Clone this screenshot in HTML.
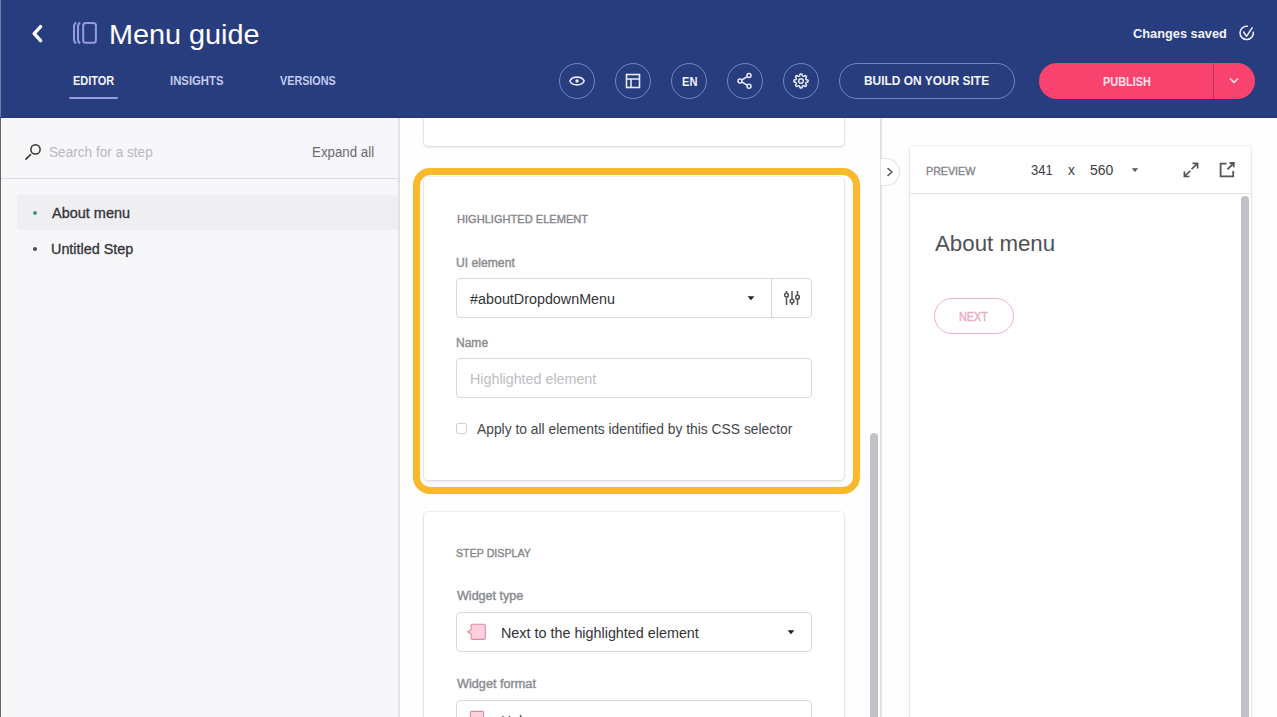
<!DOCTYPE html>
<html><head><meta charset="utf-8">
<style>
*{box-sizing:border-box;margin:0;padding:0}
html,body{width:1277px;height:717px;overflow:hidden;background:#fefefe;font-family:"Liberation Sans",sans-serif;position:relative}
.a{position:absolute;white-space:nowrap}
.t{position:absolute;white-space:nowrap;line-height:1;transform-origin:0 0}
#hdr{position:absolute;left:0;top:0;width:1277px;height:118px;background:#283d7e}
#edge{position:absolute;left:0;top:0;width:1px;height:717px;background:#666}
#edgeh{position:absolute;left:0;top:0;width:1px;height:118px;background:#6a7fa0}
.circ{position:absolute;top:63px;width:36px;height:36px;border-radius:50%;border:1px solid rgba(165,180,245,0.6)}
.tab{font-size:11px;font-weight:700;color:#b9c1e6;top:74px}
#left{position:absolute;left:1px;top:118px;width:399px;height:599px;background:#f7f7fa;border-right:2px solid #e2e2e6}
#center{position:absolute;left:400px;top:118px;width:482px;height:599px;background:#fefefe;border-right:2px solid #e2e2e6}
.card{position:absolute;background:#fff;border-radius:4px;box-shadow:0 0 0 1px rgba(0,0,0,0.04),0 1px 3px rgba(0,0,0,0.15)}
.lbl{font-size:11.8px;font-weight:700;color:#8b8b90}
.sec{font-size:11.1px;color:#7f7f85}
.inp{position:absolute;left:456px;width:356px;height:40px;border:1px solid #d9d9dc;border-radius:4px;background:#fff}
</style></head><body>
<div id="hdr"></div>
<div id="edgeh"></div>
<div class="a" style="left:0;top:117px;width:1277px;height:1px;background:#25376f"></div>
<!-- back chevron -->
<svg class="a" style="left:28px;top:21px" width="20" height="26" viewBox="0 0 20 26"><path d="M12.6 5.6 L6.2 12.6 L12.6 19.6" fill="none" stroke="#fff" stroke-width="3.4" stroke-linecap="round" stroke-linejoin="round"/></svg>
<!-- guide icon -->
<svg class="a" style="left:70px;top:19px" width="30" height="28" viewBox="0 0 30 28" fill="none" stroke="#959ae6" stroke-width="2">
<path d="M6.2 3.6 Q4 4.6 4 8 V20 Q4 23.4 6.2 24.4"/>
<path d="M10.2 3.6 Q8 4.6 8 8 V20 Q8 23.4 10.2 24.4"/>
<rect x="13.2" y="4" width="12.7" height="19.7" rx="2.5"/>
</svg>
<div class="a" style="left:69px;top:96.8px;width:49px;height:2.2px;background:#959be3;border-radius:1px"></div>

<svg class="a" style="left:1237px;top:23px" width="20" height="20" viewBox="0 0 20 20" fill="none" stroke="#eef0fa" stroke-width="1.5"><path d="M16.3 8.74 A6.7 6.7 0 1 1 10.86 3.3"/><path d="M6.6 9 L9.5 13.3 L15.1 4.8" stroke-linecap="round" stroke-linejoin="round"/></svg>

<div class="circ" style="left:559px"></div>
<div class="circ" style="left:615px"></div>
<div class="circ" style="left:671px"></div>
<div class="circ" style="left:727px"></div>
<div class="circ" style="left:783px"></div>
<!-- eye -->
<svg class="a" style="left:567px;top:71px" width="20" height="20" viewBox="0 0 20 20"><path d="M2.8 10 C5.2 4.8 14.8 4.8 17.2 10 C14.8 15.2 5.2 15.2 2.8 10 Z" fill="none" stroke="#e4e8fa" stroke-width="1.6"/><circle cx="10" cy="10" r="1.7" fill="#e8eaf8"/></svg>
<!-- layout -->
<svg class="a" style="left:623px;top:71px" width="20" height="20" viewBox="0 0 20 20"><rect x="3.5" y="3.5" width="13" height="13" fill="none" stroke="#e8eaf8" stroke-width="1.6"/><path d="M3.5 8 H16.5 M8 8 V16.5" fill="none" stroke="#e8eaf8" stroke-width="1.6"/></svg>
<!-- share -->
<svg class="a" style="left:735px;top:71px" width="20" height="20" viewBox="0 0 20 20"><circle cx="14" cy="4.6" r="2" fill="none" stroke="#e8eaf8" stroke-width="1.5"/><circle cx="5" cy="10" r="2" fill="none" stroke="#e8eaf8" stroke-width="1.5"/><circle cx="14" cy="15.2" r="2" fill="none" stroke="#e8eaf8" stroke-width="1.5"/><path d="M6.8 9 L12.2 5.7 M6.8 11 L12.2 14.1" stroke="#e8eaf8" stroke-width="1.5"/></svg>
<!-- gear -->
<svg class="a" style="left:791px;top:71px" width="20" height="20" viewBox="0 0 20 20"><path d="M10.00 2.90 L10.19 2.90 L10.37 2.92 L10.55 2.95 L10.73 3.01 L10.90 3.13 L11.05 3.36 L11.16 3.74 L11.23 4.20 L11.30 4.58 L11.39 4.81 L11.50 4.94 L11.62 5.03 L11.74 5.09 L11.86 5.14 L11.99 5.20 L12.12 5.25 L12.24 5.30 L12.37 5.34 L12.52 5.37 L12.69 5.35 L12.91 5.25 L13.23 5.03 L13.61 4.75 L13.95 4.56 L14.22 4.50 L14.42 4.54 L14.59 4.62 L14.74 4.73 L14.89 4.85 L15.02 4.98 L15.15 5.11 L15.27 5.26 L15.38 5.41 L15.46 5.58 L15.50 5.78 L15.44 6.05 L15.25 6.39 L14.97 6.77 L14.75 7.09 L14.65 7.31 L14.63 7.48 L14.66 7.63 L14.70 7.76 L14.75 7.88 L14.80 8.01 L14.86 8.14 L14.91 8.26 L14.97 8.38 L15.06 8.50 L15.19 8.61 L15.42 8.70 L15.80 8.77 L16.26 8.84 L16.64 8.95 L16.87 9.10 L16.99 9.27 L17.05 9.45 L17.08 9.63 L17.10 9.81 L17.10 10.00 L17.10 10.19 L17.08 10.37 L17.05 10.55 L16.99 10.73 L16.87 10.90 L16.64 11.05 L16.26 11.16 L15.80 11.23 L15.42 11.30 L15.19 11.39 L15.06 11.50 L14.97 11.62 L14.91 11.74 L14.86 11.86 L14.80 11.99 L14.75 12.12 L14.70 12.24 L14.66 12.37 L14.63 12.52 L14.65 12.69 L14.75 12.91 L14.97 13.23 L15.25 13.61 L15.44 13.95 L15.50 14.22 L15.46 14.42 L15.38 14.59 L15.27 14.74 L15.15 14.89 L15.02 15.02 L14.89 15.15 L14.74 15.27 L14.59 15.38 L14.42 15.46 L14.22 15.50 L13.95 15.44 L13.61 15.25 L13.23 14.97 L12.91 14.75 L12.69 14.65 L12.52 14.63 L12.37 14.66 L12.24 14.70 L12.12 14.75 L11.99 14.80 L11.86 14.86 L11.74 14.91 L11.62 14.97 L11.50 15.06 L11.39 15.19 L11.30 15.42 L11.23 15.80 L11.16 16.26 L11.05 16.64 L10.90 16.87 L10.73 16.99 L10.55 17.05 L10.37 17.08 L10.19 17.10 L10.00 17.10 L9.81 17.10 L9.63 17.08 L9.45 17.05 L9.27 16.99 L9.10 16.87 L8.95 16.64 L8.84 16.26 L8.77 15.80 L8.70 15.42 L8.61 15.19 L8.50 15.06 L8.38 14.97 L8.26 14.91 L8.14 14.86 L8.01 14.80 L7.88 14.75 L7.76 14.70 L7.63 14.66 L7.48 14.63 L7.31 14.65 L7.09 14.75 L6.77 14.97 L6.39 15.25 L6.05 15.44 L5.78 15.50 L5.58 15.46 L5.41 15.38 L5.26 15.27 L5.11 15.15 L4.98 15.02 L4.85 14.89 L4.73 14.74 L4.62 14.59 L4.54 14.42 L4.50 14.22 L4.56 13.95 L4.75 13.61 L5.03 13.23 L5.25 12.91 L5.35 12.69 L5.37 12.52 L5.34 12.37 L5.30 12.24 L5.25 12.12 L5.20 11.99 L5.14 11.86 L5.09 11.74 L5.03 11.62 L4.94 11.50 L4.81 11.39 L4.58 11.30 L4.20 11.23 L3.74 11.16 L3.36 11.05 L3.13 10.90 L3.01 10.73 L2.95 10.55 L2.92 10.37 L2.90 10.19 L2.90 10.00 L2.90 9.81 L2.92 9.63 L2.95 9.45 L3.01 9.27 L3.13 9.10 L3.36 8.95 L3.74 8.84 L4.20 8.77 L4.58 8.70 L4.81 8.61 L4.94 8.50 L5.03 8.38 L5.09 8.26 L5.14 8.14 L5.20 8.01 L5.25 7.88 L5.30 7.76 L5.34 7.63 L5.37 7.48 L5.35 7.31 L5.25 7.09 L5.03 6.77 L4.75 6.39 L4.56 6.05 L4.50 5.78 L4.54 5.58 L4.62 5.41 L4.73 5.26 L4.85 5.11 L4.98 4.98 L5.11 4.85 L5.26 4.73 L5.41 4.62 L5.58 4.54 L5.78 4.50 L6.05 4.56 L6.39 4.75 L6.77 5.03 L7.09 5.25 L7.31 5.35 L7.48 5.37 L7.63 5.34 L7.76 5.30 L7.88 5.25 L8.01 5.20 L8.14 5.14 L8.26 5.09 L8.38 5.03 L8.50 4.94 L8.61 4.81 L8.70 4.58 L8.77 4.20 L8.84 3.74 L8.95 3.36 L9.10 3.13 L9.27 3.01 L9.45 2.95 L9.63 2.92 L9.81 2.90 Z" fill="none" stroke="#e8eaf8" stroke-width="1.5" stroke-linejoin="round"/><circle cx="10" cy="10" r="2.3" fill="none" stroke="#e8eaf8" stroke-width="1.5"/></svg>

<div class="a" style="left:839px;top:63px;width:176px;height:36px;border-radius:18px;border:1px solid rgba(165,180,245,0.6)"></div>

<div class="a" style="left:1039px;top:63px;width:216px;height:36px;border-radius:18px;background:#f8436f"></div>
<div class="a" style="left:1213px;top:63px;width:1px;height:36px;background:#b8325c"></div>
<svg class="a" style="left:1227px;top:75px" width="14" height="12" viewBox="0 0 14 12"><path d="M3.5 4 L7 7.5 L10.5 4" fill="none" stroke="#fde4ea" stroke-width="1.7" stroke-linecap="round" stroke-linejoin="round"/></svg>

<!-- LEFT PANEL -->
<div id="left"></div>
<div id="edge" style="top:118px;height:599px"></div>
<svg class="a" style="left:23px;top:143px" width="20" height="20" viewBox="0 0 20 20"><circle cx="12.5" cy="6.4" r="4.6" fill="none" stroke="#333" stroke-width="1.5"/><path d="M7.6 11.5 L3 16.1" stroke="#333" stroke-width="1.6" stroke-linecap="round"/></svg>
<div class="a" style="left:1px;top:178px;width:398px;height:1px;background:#dcdce1"></div>
<div class="a" style="left:17px;top:195px;width:381px;height:35px;background:#efeff2;border-radius:3px"></div>
<div class="a" style="left:33px;top:211px;width:4px;height:4px;border-radius:50%;background:#3c9c80"></div>
<div class="a" style="left:33px;top:247px;width:4px;height:4px;border-radius:50%;background:#4a4a4e"></div>

<!-- CENTER -->
<div id="center"></div>
<div class="card" style="left:424px;top:100px;width:420px;height:46px;clip-path:inset(18px -6px -6px -6px)"></div>

<div class="a" style="left:413px;top:168px;width:447px;height:326px;border:7px solid #fab92c;border-radius:17px"></div>
<div class="card" style="left:424px;top:177px;width:420px;height:303px"></div>
<div class="inp" style="top:278px"></div>
<div class="a" style="left:771px;top:278px;width:1px;height:40px;background:#d6d6da"></div>
<svg class="a" style="left:746px;top:294px" width="10" height="8" viewBox="0 0 10 8"><path d="M1.6 2.2 H8.4 L5 6.2 Z" fill="#222"/></svg>
<svg class="a" style="left:782px;top:288px" width="20" height="20" viewBox="0 0 20 20" fill="none" stroke="#555" stroke-width="1.5"><path d="M4.5 3 V5.3 M4.5 9.2 V17 M10 3 V11.2 M10 15 V17 M15.5 3 V7.3 M15.5 11.2 V17"/><circle cx="4.5" cy="7.2" r="1.9"/><circle cx="10" cy="13.1" r="1.9"/><circle cx="15.5" cy="9.2" r="1.9"/></svg>
<div class="inp" style="top:358px"></div>
<div class="a" style="left:456.3px;top:423.4px;width:11px;height:11px;border:1.4px solid #d0d0d3;border-radius:2px;background:#fff"></div>

<div class="card" style="left:424px;top:512px;width:420px;height:260px"></div>
<div class="inp" style="top:612px"></div>
<svg class="a" style="left:465px;top:621px" width="24" height="22" viewBox="0 0 24 22"><path d="M6.1 4.6 Q6.1 3.3 7.4 3.3 H19 Q20.3 3.3 20.3 4.6 V17.1 Q20.3 18.4 19 18.4 H7.4 Q6.1 18.4 6.1 17.1 V13 L2.6 10.8 L6.1 8.6 Z" fill="#fdd1dc" stroke="#d98ca2" stroke-width="1.1" stroke-linejoin="round"/></svg>
<svg class="a" style="left:786px;top:628px" width="10" height="8" viewBox="0 0 10 8"><path d="M1.6 2.2 H8.4 L5 6.2 Z" fill="#222"/></svg>
<div class="inp" style="top:700px"></div>
<svg class="a" style="left:465px;top:708px" width="24" height="22" viewBox="0 0 24 22"><path d="M5.4 4.6 Q5.4 3.4 6.6 3.4 H17.3 Q18.5 3.4 18.5 4.6 V17.1 Q18.5 18.4 17.3 18.4 H6.6 Q5.4 18.4 5.4 17.1 Z" fill="#fdd1dc" stroke="#d98ca2" stroke-width="1.1" stroke-linejoin="round"/></svg>

<!-- center scrollbar -->
<div class="a" style="left:870px;top:433px;width:8px;height:290px;border-radius:4px;background:#c1c1c8"></div>

<!-- collapse toggle -->
<div class="a" style="left:881px;top:158px;width:19px;height:28px;border-radius:0 14px 14px 0;border:1px solid #e2e2e6;border-left:none;background:#fff"></div>
<svg class="a" style="left:884px;top:165px" width="12" height="14" viewBox="0 0 12 14"><path d="M4 3.5 L8 7 L4 10.5" fill="none" stroke="#555" stroke-width="1.6" stroke-linecap="round" stroke-linejoin="round"/></svg>

<!-- PREVIEW -->
<div class="card" style="left:910px;top:146px;width:341px;height:600px"></div>
<div class="a" style="left:910px;top:193px;width:341px;height:1px;background:#e4e4e8"></div>
<svg class="a" style="left:1130px;top:166px" width="10" height="8" viewBox="0 0 10 8"><path d="M1.8 2.3 H8.2 L5 6 Z" fill="#555"/></svg>
<svg class="a" style="left:1181px;top:160px" width="20" height="20" viewBox="0 0 20 20" fill="none" stroke="#555" stroke-width="1.7"><path d="M11.5 3.4 H16.6 V8.4 M16.6 3.4 L10.6 9.2 M3.4 11.5 V16.5 H8.5 M3.4 16.5 L9.2 10.8"/></svg>
<svg class="a" style="left:1217px;top:159px" width="20" height="20" viewBox="0 0 20 20" fill="none" stroke="#555" stroke-width="1.8"><path d="M9.5 4.6 H3.6 V17.4 H16.2 V11.9 M12.6 4 H16.8 V8.2 M16.8 4 L10.5 10.4"/></svg>
<div class="a" style="left:1241px;top:196px;width:8px;height:540px;border-radius:4px;background:#c1c1c8"></div>
<div class="a" style="left:934px;top:298px;width:80px;height:36px;border-radius:18px;border:1px solid #e9b3c6"></div>
<div class="t" id="title" style="left:109.15px;top:21px;font-size:28px;color:#ffffff;transform:scaleX(1.0289);">Menu guide</div>
<div class="t" id="tab1" style="left:73.19px;top:75px;font-size:12.3px;color:#f2f3fb;font-weight:700;transform:scaleX(0.8924);">EDITOR</div>
<div class="t" id="tab2" style="left:169.52px;top:75px;font-size:12.3px;color:#c3cbf0;font-weight:700;transform:scaleX(0.9221);">INSIGHTS</div>
<div class="t" id="tab3" style="left:279.54px;top:75px;font-size:12.3px;color:#c3cbf0;font-weight:700;transform:scaleX(0.8764);">VERSIONS</div>
<div class="t" id="en" style="left:681.55px;top:76px;font-size:12.3px;color:#f2f3fb;font-weight:700;transform:scaleX(0.9009);">EN</div>
<div class="t" id="build" style="left:864.48px;top:75px;font-size:12.3px;color:#f4f5fb;font-weight:700;transform:scaleX(0.9705);">BUILD ON YOUR SITE</div>
<div class="t" id="pub" style="left:1102.61px;top:76px;font-size:12.3px;color:#fde4ea;font-weight:700;transform:scaleX(0.8862);">PUBLISH</div>
<div class="t" id="saved" style="left:1133.33px;top:27px;font-size:13.3px;color:#f4f5fb;font-weight:700;transform:scaleX(0.9615);">Changes saved</div>
<div class="t" id="search" style="left:49.24px;top:145px;font-size:14px;color:#b8b8c0;transform:scaleX(0.9733);">Search for a step</div>
<div class="t" id="expand" style="left:312.27px;top:145px;font-size:14px;color:#6a6a70;transform:scaleX(0.9506);">Expand all</div>
<div class="t" id="about" style="left:51.65px;top:206px;font-size:14px;color:#333338;-webkit-text-stroke:0.3px #333338;transform:scaleX(1.0343);">About menu</div>
<div class="t" id="untitled" style="left:51.13px;top:242px;font-size:14px;color:#333338;-webkit-text-stroke:0.3px #333338;transform:scaleX(1.0263);">Untitled Step</div>
<div class="t" id="hl" style="left:456.89px;top:214px;font-size:11.8px;color:#86868b;-webkit-text-stroke:0.4px #86868b;transform:scaleX(0.9387);">HIGHLIGHTED ELEMENT</div>
<div class="t" id="uiel" style="left:456.23px;top:257px;font-size:12.3px;color:#8b8b90;-webkit-text-stroke:0.4px #8b8b90;transform:scaleX(0.9883);">UI element</div>
<div class="t" id="dd" style="left:469.67px;top:292px;font-size:14px;color:#333336;transform:scaleX(1.0237);">#aboutDropdownMenu</div>
<div class="t" id="name" style="left:456.36px;top:337px;font-size:12.3px;color:#8b8b90;-webkit-text-stroke:0.4px #8b8b90;transform:scaleX(0.9774);">Name</div>
<div class="t" id="ph" style="left:469.60px;top:372px;font-size:14px;color:#bdbdc2;transform:scaleX(1.0203);">Highlighted element</div>
<div class="t" id="apply" style="left:476.74px;top:422px;font-size:14px;color:#444448;transform:scaleX(0.9885);">Apply to all elements identified by this CSS selector</div>
<div class="t" id="sd" style="left:455.65px;top:548px;font-size:11.8px;color:#86868b;-webkit-text-stroke:0.4px #86868b;transform:scaleX(0.9041);">STEP DISPLAY</div>
<div class="t" id="wt" style="left:456.52px;top:590px;font-size:12.3px;color:#8b8b90;-webkit-text-stroke:0.4px #8b8b90;transform:scaleX(1.0210);">Widget type</div>
<div class="t" id="nt" style="left:501.27px;top:626px;font-size:14px;color:#333336;transform:scaleX(1.0250);">Next to the highlighted element</div>
<div class="t" id="wf" style="left:456.52px;top:678px;font-size:12.3px;color:#8b8b90;-webkit-text-stroke:0.4px #8b8b90;transform:scaleX(1.0312);">Widget format</div>
<div class="t" id="pv" style="left:926.42px;top:166px;font-size:11.8px;color:#86868b;-webkit-text-stroke:0.4px #86868b;transform:scaleX(0.9066);">PREVIEW</div>
<div class="t" id="w341" style="left:1030.95px;top:163px;font-size:14px;color:#3c3c40;transform:scaleX(0.9308);">341</div>
<div class="t" id="xx" style="left:1068.06px;top:163px;font-size:14px;color:#3c3c40;transform:scaleX(0.9740);">x</div>
<div class="t" id="h560" style="left:1089.70px;top:163px;font-size:14px;color:#3c3c40;transform:scaleX(0.9979);">560</div>
<div class="t" id="pabout" style="left:935.33px;top:233px;font-size:22px;color:#505054;transform:scaleX(1.0124);">About menu</div>
<div class="t" id="next" style="left:959.09px;top:311px;font-size:12.5px;color:#e9abc0;-webkit-text-stroke:0.4px #e9abc0;transform:scaleX(0.8695);">NEXT</div>
<div class="t" id="modal" style="left:501.01px;top:714px;font-size:14px;color:#333336;">Hel</div>
</body></html>
